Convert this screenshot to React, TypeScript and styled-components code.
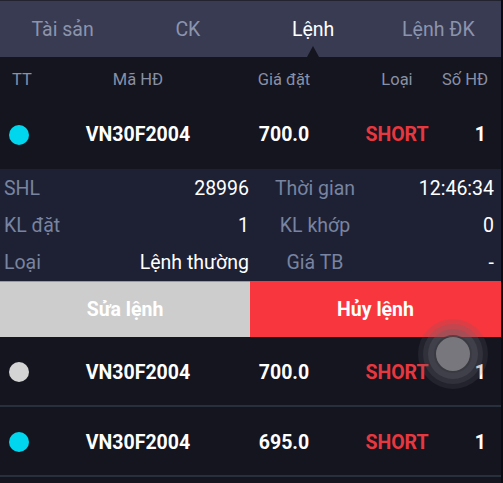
import React from 'react';
import styled, { createGlobalStyle } from 'styled-components';

type Order = {
  id: number;
  status: 'active' | 'done';
  code: string;
  price: string;
  side: string;
  qty: number;
};

const TABS = ['Tài sản', 'CK', 'Lệnh', 'Lệnh ĐK'];
const ACTIVE_TAB = 2;

const ORDERS: Order[] = [
  { id: 1, status: 'active', code: 'VN30F2004', price: '700.0', side: 'SHORT', qty: 1 },
  { id: 2, status: 'done', code: 'VN30F2004', price: '700.0', side: 'SHORT', qty: 1 },
  { id: 3, status: 'active', code: 'VN30F2004', price: '695.0', side: 'SHORT', qty: 1 },
];

const DETAILS = [
  ['SHL', '28996', 'Thời gian', '12:46:34'],
  ['KL đặt', '1', 'KL khớp', '0'],
  ['Loại', 'Lệnh thường', 'Giá TB', '-'],
];

const GlobalStyle = createGlobalStyle`
  html, body {
    margin: 0;
    padding: 0;
    background: #14151f;
  }
  body {
    font-family: Roboto, 'Noto Sans', sans-serif;
  }
`;

const App: React.FC = () => {
  const [first, ...rest] = ORDERS;

  return (
    <Screen>
      <GlobalStyle />
      <TabBar>
        {TABS.map((tab, i) => (
          <Tab key={tab} active={i === ACTIVE_TAB}>
            {tab}
            {i === ACTIVE_TAB && <TabArrow />}
          </Tab>
        ))}
      </TabBar>

      <HeaderRow>
        <HeadCell align="left" pad={12}>TT</HeadCell>
        <HeadCell>Mã HĐ</HeadCell>
        <HeadCell>Giá đặt</HeadCell>
        <HeadCell>Loại</HeadCell>
        <HeadCell align="right">Số HĐ</HeadCell>
      </HeaderRow>

      <OrderRow order={first} />

      <DetailPanel>
        {DETAILS.map(([l1, v1, l2, v2]) => (
          <React.Fragment key={l1}>
            <DetailLabel>{l1}</DetailLabel>
            <DetailValue>{v1}</DetailValue>
            <DetailLabel center>{l2}</DetailLabel>
            <DetailValue>{v2}</DetailValue>
          </React.Fragment>
        ))}
      </DetailPanel>

      <ActionBar>
        <ActionButton variant="edit">Sửa lệnh</ActionButton>
        <ActionButton variant="cancel">Hủy lệnh</ActionButton>
      </ActionBar>

      <List>
        {rest.map((o) => (
          <OrderRow key={o.id} order={o} bordered />
        ))}
        <TouchMark>
          <TouchRing size={70} alpha={0.18} />
          <TouchRing size={60} alpha={0.22} />
          <TouchRing size={50} alpha={0.3} />
          <TouchDot />
        </TouchMark>
      </List>
    </Screen>
  );
};

const OrderRow: React.FC<{ order: Order; bordered?: boolean }> = ({ order, bordered }) => (
  <Row bordered={bordered}>
    <StatusDot status={order.status} />
    <Cell>{order.code}</Cell>
    <Cell>{order.price}</Cell>
    <Cell red>{order.side}</Cell>
    <Cell align="right">{order.qty}</Cell>
  </Row>
);

export default App;

const Screen = styled.div`
  position: relative;
  width: 501px;
  height: 483px;
  overflow: hidden;
  background: #14151f;
  border-right: 2px solid #0b0c11;
`;

const TabBar = styled.div`
  display: grid;
  grid-template-columns: repeat(4, 1fr);
  height: 57px;
  background: #393b52;
  border-top: 1px solid #22232f;
  box-sizing: border-box;
`;

const Tab = styled.div<{ active: boolean }>`
  position: relative;
  display: flex;
  justify-content: center;
  padding-top: 17px;
  font-size: 19.5px;
  color: ${({ active }) => (active ? '#ffffff' : '#8c94ad')};
`;

const TabArrow = styled.span`
  position: absolute;
  bottom: 0;
  left: 50%;
  transform: translateX(-50%);
  width: 0;
  height: 0;
  border-left: 6px solid transparent;
  border-right: 6px solid transparent;
  border-bottom: 11px solid #14151f;
`;

const columns = `
  display: grid;
  grid-template-columns: 60px 156px 136px 90px 1fr;
  align-items: center;
  padding-right: 15px;
`;

const HeaderRow = styled.div`
  ${columns};
  height: 43px;
  font-size: 16.5px;
  color: #8890a6;
`;

const HeadCell = styled.div<{ align?: 'left' | 'right'; pad?: number }>`
  text-align: ${({ align }) => align || 'center'};
  justify-self: ${({ align }) => (align === 'right' ? 'end' : 'stretch')};
  padding-left: ${({ pad }) => pad || 0}px;
  padding-top: 1px;
  white-space: nowrap;
`;

const Row = styled.div<{ bordered?: boolean }>`
  ${columns};
  height: ${({ bordered }) => (bordered ? 70 : 69)}px;
  box-sizing: border-box;
  border-bottom: ${({ bordered }) => (bordered ? '2px solid #28303c' : 'none')};
  padding-top: ${({ bordered }) => (bordered ? 2 : 0)}px;
`;

const StatusDot = styled.span<{ status: 'active' | 'done' }>`
  width: 20px;
  height: 20px;
  margin-left: 9px;
  border-radius: 50%;
  background: ${({ status }) => (status === 'active' ? '#00d7ee' : '#d4d4d4')};
`;

const Cell = styled.div<{ align?: 'right'; red?: boolean }>`
  text-align: ${({ align }) => align || 'center'};
  font-size: 19.5px;
  font-weight: 700;
  white-space: nowrap;
  color: ${({ red }) => (red ? '#e8383f' : '#ffffff')};
`;

const DetailPanel = styled.div`
  display: grid;
  grid-template-columns: 125px 120px 116px 1fr;
  grid-auto-rows: 37px;
  align-items: center;
  padding: 1px 7px 0 4px;
  background: #1e2134;
  font-size: 19.5px;
`;

const DetailLabel = styled.div<{ center?: boolean }>`
  color: #7884a0;
  text-align: ${({ center }) => (center ? 'center' : 'left')};
  padding-left: ${({ center }) => (center ? 16 : 0)}px;
  white-space: nowrap;
`;

const DetailValue = styled.div`
  color: #ffffff;
  text-align: right;
  white-space: nowrap;
`;

const ActionBar = styled.div`
  display: grid;
  grid-template-columns: 250px 1fr;
  height: 56px;
`;

const ActionButton = styled.button<{ variant: 'edit' | 'cancel' }>`
  border: none;
  border-top: 1px solid ${({ variant }) => (variant === 'edit' ? '#9a9a9a' : '#f8363e')};
  padding: 0;
  font-family: inherit;
  font-size: 19.5px;
  font-weight: 700;
  color: #ffffff;
  background: ${({ variant }) => (variant === 'edit' ? '#cdcdcd' : '#f8363e')};
`;

const List = styled.div`
  position: relative;
`;

const TouchMark = styled.div`
  position: absolute;
  left: 418px;
  top: -18px;
  width: 70px;
  height: 70px;
  display: flex;
  align-items: center;
  justify-content: center;
  pointer-events: none;
`;

const TouchRing = styled.span<{ size: number; alpha: number }>`
  position: absolute;
  width: ${({ size }) => size}px;
  height: ${({ size }) => size}px;
  border-radius: 50%;
  background: rgba(100, 100, 108, ${({ alpha }) => alpha});
`;

const TouchDot = styled.span`
  position: absolute;
  width: 34px;
  height: 34px;
  border-radius: 50%;
  background: #77777d;
  box-shadow: 0 0 0 2px rgba(55, 55, 62, 0.7);
`;
